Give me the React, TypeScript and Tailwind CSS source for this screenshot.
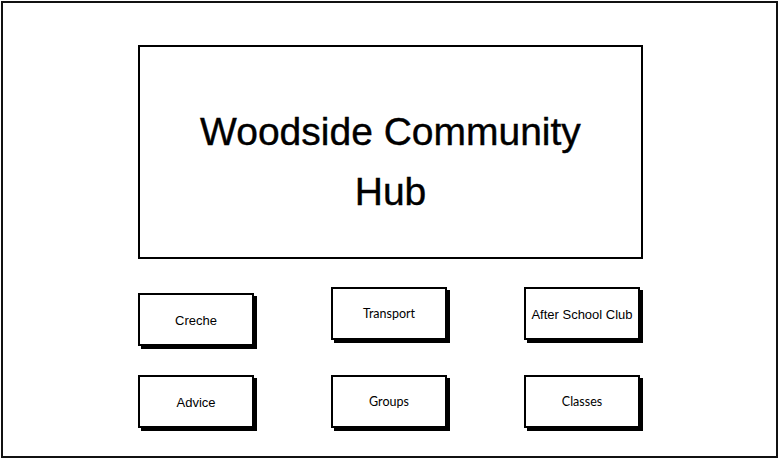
const rowOne = [
  { label: "Creche", font: "arial", offset: "mt-[6px]" },
  { label: "Transport", font: "round", offset: "" },
  { label: "After School Club", font: "arial", offset: "" },
];

const rowTwo = [
  { label: "Advice", font: "arial", offset: "" },
  { label: "Groups", font: "round", offset: "" },
  { label: "Classes", font: "round", offset: "" },
];

function Tile({ label, font, offset }: { label: string; font: string; offset: string }) {
  const face =
    font === "arial"
      ? "font-['Liberation_Sans',Arial,sans-serif] text-[13px]"
      : "font-['Lato','DejaVu_Sans',sans-serif] text-[12.5px]";
  return (
    <div
      className={`flex h-[53px] w-[116px] items-center justify-center border-2 border-black bg-white pt-[2px] text-black shadow-[3px_3px_0_#000] ${offset}`}
    >
      <span className={face}>{label}</span>
    </div>
  );
}

export default function App() {
  return (
    <div className="h-[460px] w-[780px] bg-white p-px">
      <div className="flex h-[457px] w-[777px] flex-col items-start border-2 border-[#111] pl-[135px] pt-[42px]">
        {/* banner */}
        <div className="flex h-[214px] w-[505px] items-center justify-center border-2 border-black">
          <h1 className="pt-[20px] text-center font-['Liberation_Sans',Arial,sans-serif] text-[39px] leading-[60px] text-black [-webkit-text-stroke:0.4px_#000]">
            Woodside Community
            <br />
            Hub
          </h1>
        </div>

        <div className="mt-[28px] flex items-start gap-[77px]">
          {rowOne.map((t) => (
            <Tile key={t.label} {...t} />
          ))}
        </div>
        <div className="mt-[29px] flex items-start gap-[77px]">
          {rowTwo.map((t) => (
            <Tile key={t.label} {...t} />
          ))}
        </div>
      </div>
    </div>
  );
}
